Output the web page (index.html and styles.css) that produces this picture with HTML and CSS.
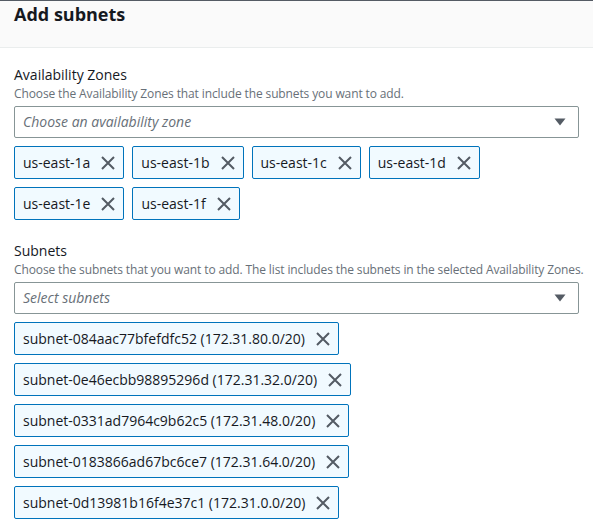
FILE: index.html
```html
<!DOCTYPE html>
<html lang="en">
<head>
<meta charset="utf-8">
<title>Add subnets</title>
<link rel="stylesheet" href="styles.css">
</head>
<body>
<div class="panel">
  <header class="panel-header">
    <h2 class="panel-title">Add subnets</h2>
  </header>
  <div class="panel-body">
    <section class="field">
      <div class="field-label">Availability Zones</div>
      <div class="field-desc">Choose the Availability Zones that include the subnets you want to add.</div>
      <div class="select">
        <span class="placeholder">Choose an availability zone</span>
        <svg class="caret" width="12" height="8" viewBox="0 0 12 8"><path d="M0.5 0.5h11L6 7.5z" fill="#545b64"/></svg>
      </div>
      <div class="tokens tokens-wrap">
        <div class="token"><span>us-east-1a</span><svg class="x" width="16" height="16" viewBox="0 0 16 16"><path d="M2 2L14 14M14 2L2 14" stroke="#545b64" stroke-width="2" fill="none"/></svg></div>
        <div class="token"><span>us-east-1b</span><svg class="x" width="16" height="16" viewBox="0 0 16 16"><path d="M2 2L14 14M14 2L2 14" stroke="#545b64" stroke-width="2" fill="none"/></svg></div>
        <div class="token"><span>us-east-1c</span><svg class="x" width="16" height="16" viewBox="0 0 16 16"><path d="M2 2L14 14M14 2L2 14" stroke="#545b64" stroke-width="2" fill="none"/></svg></div>
        <div class="token"><span>us-east-1d</span><svg class="x" width="16" height="16" viewBox="0 0 16 16"><path d="M2 2L14 14M14 2L2 14" stroke="#545b64" stroke-width="2" fill="none"/></svg></div>
        <div class="token"><span>us-east-1e</span><svg class="x" width="16" height="16" viewBox="0 0 16 16"><path d="M2 2L14 14M14 2L2 14" stroke="#545b64" stroke-width="2" fill="none"/></svg></div>
        <div class="token"><span>us-east-1f</span><svg class="x" width="16" height="16" viewBox="0 0 16 16"><path d="M2 2L14 14M14 2L2 14" stroke="#545b64" stroke-width="2" fill="none"/></svg></div>
      </div>
    </section>
    <section class="field field-second">
      <div class="field-label">Subnets</div>
      <div class="field-desc">Choose the subnets that you want to add. The list includes the subnets in the selected Availability Zones.</div>
      <div class="select">
        <span class="placeholder">Select subnets</span>
        <svg class="caret" width="12" height="8" viewBox="0 0 12 8"><path d="M0.5 0.5h11L6 7.5z" fill="#545b64"/></svg>
      </div>
      <div class="tokens tokens-stack">
        <div class="token"><span>subnet-084aac77bfefdfc52 (172.31.80.0/20)</span><svg class="x" width="16" height="16" viewBox="0 0 16 16"><path d="M2 2L14 14M14 2L2 14" stroke="#545b64" stroke-width="2" fill="none"/></svg></div>
        <div class="token"><span>subnet-0e46ecbb98895296d (172.31.32.0/20)</span><svg class="x" width="16" height="16" viewBox="0 0 16 16"><path d="M2 2L14 14M14 2L2 14" stroke="#545b64" stroke-width="2" fill="none"/></svg></div>
        <div class="token"><span>subnet-0331ad7964c9b62c5 (172.31.48.0/20)</span><svg class="x" width="16" height="16" viewBox="0 0 16 16"><path d="M2 2L14 14M14 2L2 14" stroke="#545b64" stroke-width="2" fill="none"/></svg></div>
        <div class="token"><span>subnet-0183866ad67bc6ce7 (172.31.64.0/20)</span><svg class="x" width="16" height="16" viewBox="0 0 16 16"><path d="M2 2L14 14M14 2L2 14" stroke="#545b64" stroke-width="2" fill="none"/></svg></div>
        <div class="token"><span>subnet-0d13981b16f4e37c1 (172.31.0.0/20)</span><svg class="x" width="16" height="16" viewBox="0 0 16 16"><path d="M2 2L14 14M14 2L2 14" stroke="#545b64" stroke-width="2" fill="none"/></svg></div>
      </div>
    </section>
  </div>
</div>
</body>
</html>
```

FILE: styles.css
```css
* { box-sizing: border-box; }
html, body {
  margin: 0;
  padding: 0;
  background: #ffffff;
}
body {
  font-family: "Open Sans", "Noto Sans", sans-serif;
  color: #16191f;
  font-size: 14px;
  line-height: 20px;
}
.panel {
  border-top: 1px solid #545b64;
}
.panel-header {
  background: #fafafa;
  height: 47px;
  border-bottom: 1px solid #eaeded;
  padding: 2px 14px 0;
}
.panel-title {
  margin: 0;
  font-size: 18px;
  line-height: 22px;
  font-weight: 700;
  color: #16191f;
}
.panel-body {
  padding: 17px 14px 0;
}
.field-second {
  margin-top: 21px;
}
.field-label {
  font-size: 14px;
  line-height: 20px;
  color: #16191f;
}
.field-desc {
  margin-top: 1px;
  font-size: 12px;
  line-height: 16px;
  letter-spacing: -0.12px;
  white-space: nowrap;
  color: #687078;
}
.select {
  margin-top: 4px;
  height: 32px;
  border: 1px solid #879596;
  border-radius: 2px;
  padding: 5px 12px 5px 8px;
  display: flex;
  align-items: center;
  justify-content: space-between;
}
.placeholder {
  font-style: italic;
  color: #687078;
}
.caret {
  display: block;
}
.tokens {
  margin-top: 8px;
  display: flex;
  gap: 8px;
}
.tokens-wrap {
  flex-wrap: wrap;
}
.tokens-stack {
  flex-direction: column;
  align-items: flex-start;
}
.token {
  height: 33px;
  display: flex;
  align-items: center;
  gap: 10px;
  padding: 0 7px 0 8px;
  border: 1px solid #0073bb;
  border-radius: 2px;
  background: #f1faff;
  color: #16191f;
}
.x {
  display: block;
}
```
